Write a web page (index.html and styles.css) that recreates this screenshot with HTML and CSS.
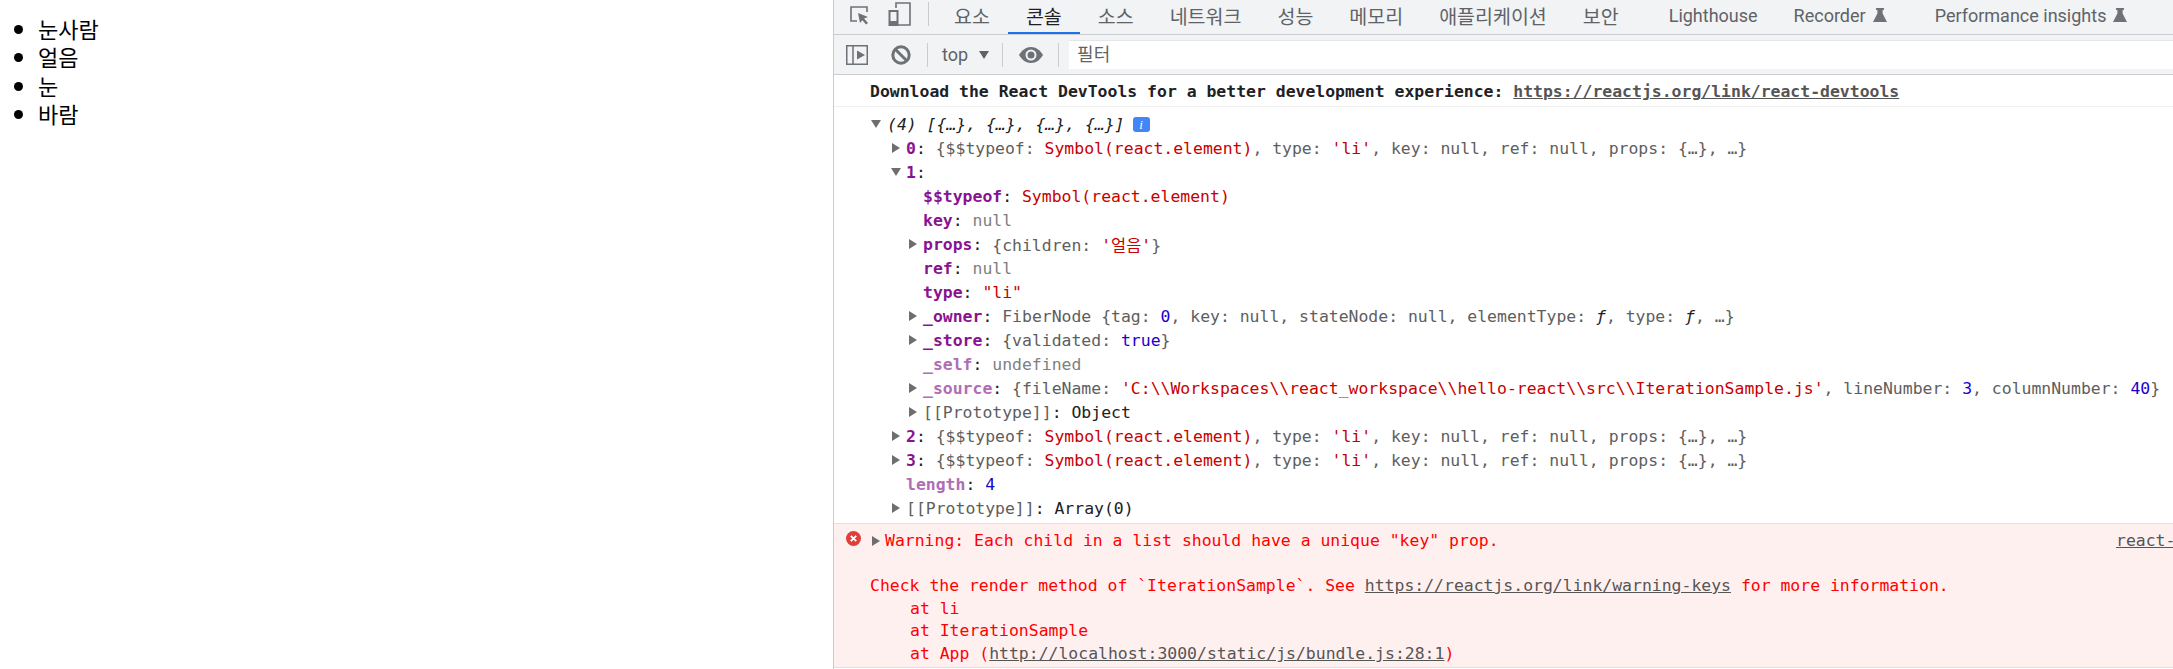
FILE: index.html
```html
<!DOCTYPE html>
<html lang="ko">
<head>
  <meta charset="UTF-8" />
  <title>IterationSample</title>
  <link rel="stylesheet" href="styles.css">
</head>
<body>
  <div class="preview">
    <ul class="word-list">
      <li>눈사람</li>
      <li>얼음</li>
      <li>눈</li>
      <li>바람</li>
    </ul>
  </div>

  <div class="devtools">
    <!-- tabs -->
    <div class="tabbar">
      <svg class="icon-inspect" width="20" height="20" viewBox="0 0 20 20">
        <path d="M8 16H2V2h16v5" fill="none" stroke="#6e7175" stroke-width="1.6"/>
        <path d="M9 8l10 4-4 1.6 4 4.4-2 1.6-3.6-4.4L11 18z" fill="#6e7175"/>
      </svg>
      <svg class="icon-device" width="23" height="24" viewBox="0 0 23 24">
        <path d="M8 6V1h14v22H9" fill="none" stroke="#6e7175" stroke-width="1.6"/>
        <rect x="1.5" y="9" width="8" height="14" fill="none" stroke="#6e7175" stroke-width="2"/>
        <rect x="1.5" y="19" width="8" height="4" fill="#6e7175"/>
      </svg>
      <span class="vsep tab-sep"></span>
      <a class="tab">요소</a>
      <a class="tab active">콘솔</a>
      <a class="tab">소스</a>
      <a class="tab">네트워크</a>
      <a class="tab">성능</a>
      <a class="tab">메모리</a>
      <a class="tab">애플리케이션</a>
      <a class="tab">보안</a>
      <a class="tab tab-lh">Lighthouse</a>
      <a class="tab tab-rec">Recorder
        <svg class="flask" width="14" height="14" viewBox="0 0 14 14"><path d="M3 0h8v2H9.6v3.5L14 14H0L4.4 5.500V2H3z" fill="#6e7175"/></svg>
      </a>
      <a class="tab tab-perf">Performance insights
        <svg class="flask" width="14" height="14" viewBox="0 0 14 14"><path d="M3 0h8v2H9.6v3.5L14 14H0L4.4 5.500V2H3z" fill="#6e7175"/></svg>
      </a>
    </div>

    <!-- console toolbar -->
    <div class="toolbar">
      <svg class="icon-sidebar" width="22" height="20" viewBox="0 0 22 20">
        <rect x="0.75" y="0.75" width="20.5" height="18.500" fill="none" stroke="#6e7175" stroke-width="1.500"/>
        <path d="M7 1v18" stroke="#6e7175" stroke-width="1.500"/>
        <path d="M11 5.500l8 4.500-8 4.500z" fill="#6e7175"/>
      </svg>
      <svg class="icon-clear" width="20" height="20" viewBox="0 0 20 20">
        <circle cx="10" cy="10" r="8.200" fill="none" stroke="#6e7175" stroke-width="3"/>
        <path d="M4 4l12 12" stroke="#6e7175" stroke-width="3"/>
      </svg>
      <span class="vsep bar-sep"></span>
      <span class="context">top</span>
      <span class="context-arrow"></span>
      <span class="vsep bar-sep"></span>
      <svg class="icon-eye" width="24" height="16" viewBox="0 0 24 16">
        <path d="M0 8C3 3 7 0 12 0s9 3 12 8c-3 5-7 8-12 8S3 13 0 8z" fill="#6e7175"/>
        <circle cx="12" cy="8" r="5.500" fill="#f1f3f4"/>
        <circle cx="12" cy="8" r="3.500" fill="#6e7175"/>
      </svg>
      <span class="vsep filter-sep"></span>
      <div class="filter">필터</div>
    </div>

    <!-- console output -->
    <div class="message bold">Download the React DevTools for a better development experience: <a class="link">https://reactjs.org/link/react-devtools</a></div>

    <div class="log">
      <div class="row lv0 open"><i class="arrow down"></i><em class="dark">(4) [{…}, {…}, {…}, {…}]</em><span class="info">i</span></div>
      <div class="row lv1"><i class="arrow"></i><b class="key">0</b>: <span class="gray">{$$typeof: <span class="str">Symbol(react.element)</span>, type: <span class="str">'li'</span>, key: null, ref: null, props: {…}, …}</span></div>
      <div class="row lv1"><i class="arrow down"></i><b class="key">1</b>:</div>
      <div class="row lv2"><i class="arrow none"></i><b class="key">$$typeof</b>: <span class="str">Symbol(react.element)</span></div>
      <div class="row lv2"><i class="arrow none"></i><b class="key">key</b>: <span class="null">null</span></div>
      <div class="row lv2"><i class="arrow"></i><b class="key">props</b>: <span class="gray">{children: <span class="str">'얼음'</span>}</span></div>
      <div class="row lv2"><i class="arrow none"></i><b class="key">ref</b>: <span class="null">null</span></div>
      <div class="row lv2"><i class="arrow none"></i><b class="key">type</b>: <span class="str">"li"</span></div>
      <div class="row lv2"><i class="arrow"></i><b class="key">_owner</b>: <span class="gray">FiberNode {tag: <span class="num">0</span>, key: null, stateNode: null, elementType: <em class="dark">ƒ</em>, type: <em class="dark">ƒ</em>, …}</span></div>
      <div class="row lv2"><i class="arrow"></i><b class="key">_store</b>: <span class="gray">{validated: <span class="num">true</span>}</span></div>
      <div class="row lv2"><i class="arrow none"></i><b class="key dim">_self</b>: <span class="null">undefined</span></div>
      <div class="row lv2"><i class="arrow"></i><b class="key dim">_source</b>: <span class="gray">{fileName: <span class="str">'C:\\Workspaces\\react_workspace\\hello-react\\src\\IterationSample.js'</span>, lineNumber: <span class="num">3</span>, columnNumber: <span class="num">40</span>}</span></div>
      <div class="row lv2"><i class="arrow"></i><span class="gray">[[Prototype]]</span>: Object</div>
      <div class="row lv1"><i class="arrow"></i><b class="key">2</b>: <span class="gray">{$$typeof: <span class="str">Symbol(react.element)</span>, type: <span class="str">'li'</span>, key: null, ref: null, props: {…}, …}</span></div>
      <div class="row lv1"><i class="arrow"></i><b class="key">3</b>: <span class="gray">{$$typeof: <span class="str">Symbol(react.element)</span>, type: <span class="str">'li'</span>, key: null, ref: null, props: {…}, …}</span></div>
      <div class="row lv1"><i class="arrow none"></i><b class="key dim">length</b>: <span class="num">4</span></div>
      <div class="row lv1"><i class="arrow"></i><span class="gray">[[Prototype]]</span>: Array(0)</div>
    </div>

    <div class="error">
      <div class="error-head">
        <svg class="icon-error" width="15" height="15" viewBox="0 0 15 15">
          <circle cx="7.500" cy="7.500" r="7.500" fill="#e0403a"/>
          <path d="M4.800 4.800l5.400 5.400M10.200 4.800l-5.400 5.400" stroke="#fff" stroke-width="1.800"/>
        </svg>
        <i class="arrow"></i>
        <span class="error-title">Warning: Each child in a list should have a unique "key" prop.</span>
        <a class="link source">react-dom.development.js:86</a>
      </div>
      <div class="error-body">
        <div class="error-line">Check the render method of `IterationSample`. See <a class="link">https://reactjs.org/link/warning-keys</a> for more information.</div>
        <div class="error-line stack">at li</div>
        <div class="error-line stack">at IterationSample</div>
        <div class="error-line stack">at App (<a class="link">http://localhost:3000/static/js/bundle.js:28:1</a>)</div>
      </div>
    </div>
  </div>
</body>
</html>
```

FILE: styles.css
```css
html, body {
  margin: 0;
  height: 100%;
  overflow: hidden;
}

body {
  display: flex;
  background-color: #fff;
  font-family: "Noto Sans CJK KR", sans-serif;
}

/* page on the left */
.preview {
  width: 833px;
  flex: none;
}

.word-list {
  margin: 14px 0 0;
  padding-left: 38px;
  font-size: 22px;
  line-height: 28.300px;
  color: #000;
}

/* devtools panel */
.devtools {
  flex: 1;
  min-width: 0;
  border-left: 1px solid #ccc;
  font-family: "DejaVu Sans Mono", "Noto Sans CJK KR", monospace;
  font-size: 16.450px;
  color: #202124;
}

.tabbar {
  display: flex;
  align-items: center;
  height: 34px;
  background-color: #f1f3f4;
  border-bottom: 1px solid #cbcdd1;
  font-family: Roboto, "Noto Sans CJK KR", sans-serif;
  font-size: 19.500px;
  color: #5f6368;
}

.icon-inspect {
  margin-left: 15px;
  margin-bottom: 5px;
}

.icon-device {
  margin-left: 19px;
  margin-bottom: 6px;
}

.vsep {
  flex: none;
  width: 1px;
  height: 24px;
  background-color: #ccc;
}

.tab-sep {
  margin-left: 17px;
  margin-right: 7px;
  margin-bottom: 6px;
}

.tab {
  display: flex;
  align-items: center;
  height: 100%;
  box-sizing: border-box;
  padding: 0 18px 4px;
  white-space: nowrap;
}

.tab.active {
  color: #202124;
  padding-bottom: 2px;
  border-bottom: 2px solid #1a73e8;
}

.tab-lh,
.tab-rec,
.tab-perf {
  font-size: 18px;
}

.tab-lh {
  margin-left: 14px;
}

.flask {
  margin-left: 7px;
}

.tab-perf {
  margin-left: 12px;
}

.toolbar {
  display: flex;
  align-items: center;
  height: 39px;
  background-color: #f1f3f4;
  border-bottom: 1px solid #cbcdd1;
  font-family: Roboto, "Noto Sans CJK KR", sans-serif;
  color: #5f6368;
}

.icon-sidebar {
  margin-left: 12px;
}

.icon-clear {
  margin-left: 23px;
}

.bar-sep {
  margin-left: 16px;
}

.context {
  margin-left: 14px;
  font-size: 18px;
}

.context-arrow {
  margin-left: 11px;
  margin-right: 13px;
  border-left: 5px solid transparent;
  border-right: 5px solid transparent;
  border-top: 8px solid #5f6368;
}

.toolbar .context-arrow + .bar-sep {
  margin-left: 0;
}

.icon-eye {
  margin-left: 16px;
}

.filter-sep {
  margin-left: 15px;
}

.filter {
  flex: 1;
  height: 29px;
  margin-left: 10px;
  padding-left: 8px;
  background-color: #fff;
  border-top: 1px solid #e4e6e8;
  box-sizing: border-box;
  font-size: 18px;
  line-height: 27px;
  color: #5f6368;
}

.message {
  height: 32px;
  box-sizing: border-box;
  padding: 1px 0 0 36px;
  border-bottom: 1px solid #f0f0f0;
  line-height: 31px;
  white-space: pre;
  overflow: hidden;
}

.bold {
  font-weight: bold;
}

.link {
  color: #555;
  text-decoration: underline;
}

.log {
  height: 416px;
  padding-top: 5px;
  box-sizing: border-box;
}

.row {
  display: flex;
  align-items: center;
  height: 24px;
  white-space: pre;
}

.lv0 { padding-left: 37px; }
.lv1 { padding-left: 57px; }
.lv2 { padding-left: 74px; }

.arrow {
  flex: none;
  width: 0;
  height: 0;
  margin-right: 6px;
  border-top: 5.500px solid transparent;
  border-bottom: 5.500px solid transparent;
  border-left: 8px solid #6e6e6e;
  margin-left: 1px;
}

.arrow.down {
  margin-left: 0;
  margin-right: 5px;
  border-left: 5px solid transparent;
  border-right: 5px solid transparent;
  border-top: 8px solid #6e6e6e;
  border-bottom: none;
}

.arrow.none {
  border-color: transparent;
}

.lv0 .arrow.down {
  margin-right: 6px;
}

.key {
  color: #881391;
}

.key.dim {
  color: #ae6db5;
}

.gray {
  color: #5e5e5e;
}

.str {
  color: #c80000;
}

.null {
  color: #808080;
}

.num {
  color: #1c00cf;
}

.dark {
  color: #202124;
}

.info {
  width: 17px;
  height: 15px;
  margin-left: 8px;
  border-radius: 3px;
  background-color: #4285f4;
  color: #fff;
  font: italic 13px/15px "Liberation Serif", serif;
  text-align: center;
}

.error {
  height: 145px;
  box-sizing: border-box;
  background-color: #fff0f0;
  border-top: 1px solid #ffd6d6;
  border-bottom: 1px solid #ffd6d6;
  color: #f00;
}

.error-head {
  display: flex;
  align-items: center;
  height: 33px;
  padding-left: 12px;
  white-space: pre;
}

.icon-error {
  margin-right: 11px;
  margin-top: -5px;
}

.error-head .arrow {
  margin-right: 5px;
  margin-left: 0;
}

.error-title {
  flex: 1;
}

.source {
  flex: none;
  width: 57px;
  overflow: hidden;
}

.error-body {
  margin-top: 18px;
  padding-left: 36px;
}

.error-line {
  height: 22.700px;
  line-height: 22.700px;
  white-space: pre;
}

.stack {
  padding-left: 40px;
}
```
